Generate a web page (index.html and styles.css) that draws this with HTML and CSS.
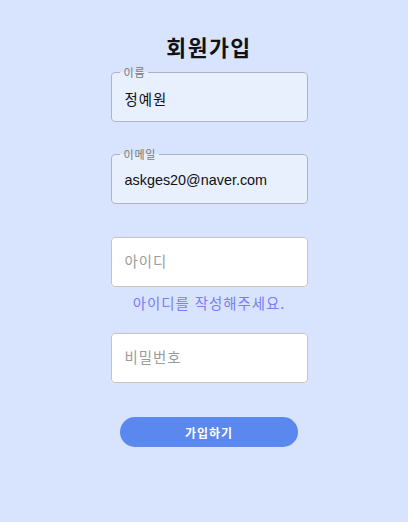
FILE: index.html
```html
<!DOCTYPE html>
<html lang="ko">
<head>
<meta charset="utf-8">
<title>회원가입</title>
<link rel="stylesheet" href="styles.css">
</head>
<body>
<main class="page">
  <h1 class="title">회원가입</h1>
  <form class="form">
    <fieldset class="field filled f-name">
      <legend class="field-label">이름</legend>
      <input class="field-input ko" type="text" value="정예원">
    </fieldset>
    <fieldset class="field filled f-email">
      <legend class="field-label">이메일</legend>
      <input class="field-input" type="text" value="askges20@naver.com">
    </fieldset>
    <fieldset class="field f-id">
      <input class="field-input" type="text" placeholder="아이디">
    </fieldset>
    <p class="helper">아이디를 작성해주세요.</p>
    <fieldset class="field f-pw">
      <input class="field-input" type="password" placeholder="비밀번호">
    </fieldset>
    <button class="submit" type="button">가입하기</button>
  </form>
</main>
</body>
</html>
```
FILE: styles.css
```css
html, body {
  margin: 0;
  padding: 0;
}
body {
  background: #d8e3fd;
  font-family: "Liberation Sans", "Noto Sans CJK KR", sans-serif;
  width: 408px;
  height: 522px;
  overflow: hidden;
}
.page {
  display: flex;
  flex-direction: column;
  align-items: center;
  padding-left: 10px;
}
.title {
  margin: 32px 0 0;
  font-family: "Noto Sans CJK KR", sans-serif;
  font-size: 21.6px;
  font-weight: 700;
  line-height: 30px;
  letter-spacing: 1.5px;
  color: #111;
}
.form {
  display: flex;
  flex-direction: column;
  align-items: center;
  width: 197px;
}
.field {
  box-sizing: border-box;
  width: 197px;
  margin: 0;
  padding: 0;
  border: 1px solid #c4c4c4;
  border-radius: 4px;
  background: #fff;
  min-inline-size: 0;
}
.field.filled {
  background: #e8f0fe;
  border-color: #aeb4c4;
}
.field-label {
  margin-left: 8px;
  padding: 0 3px 0 4px;
  font-family: "Noto Sans CJK KR", sans-serif;
  font-size: 11px;
  line-height: 12px;
  letter-spacing: 0.8px;
  color: #777;
}
.field-input {
  display: block;
  box-sizing: border-box;
  width: 100%;
  height: 48px;
  margin: 0;
  padding: 0 13px;
  border: 0;
  outline: none;
  background: transparent;
  font-family: "Liberation Sans", "Noto Sans CJK KR", sans-serif;
  font-size: 14.4px;
  color: #111;
}
.field-input.ko {
  letter-spacing: 1px;
}
.filled .field-input {
  height: 43px;
  padding-bottom: 3px;
}
.field-input::placeholder {
  color: #9a9a9a;
  font-family: "Noto Sans CJK KR", sans-serif;
  letter-spacing: 1px;
}
.f-name { margin-top: 4px; }
.f-email { margin-top: 26px; }
.f-id { margin-top: 33px; }
.f-pw { margin-top: 0; }
.helper {
  margin: 6px 0 20px;
  font-family: "Noto Sans CJK KR", sans-serif;
  font-size: 14.4px;
  line-height: 20px;
  letter-spacing: 1px;
  color: #7b7cf6;
  text-align: center;
  white-space: nowrap;
}
.submit {
  margin-top: 34px;
  width: 178px;
  height: 30px;
  border: 0;
  border-radius: 15px;
  background: #5a88ef;
  color: #fff;
  font-family: "Noto Sans CJK KR", sans-serif;
  font-size: 12px;
  font-weight: 700;
  letter-spacing: 1px;
  cursor: pointer;
}
```
